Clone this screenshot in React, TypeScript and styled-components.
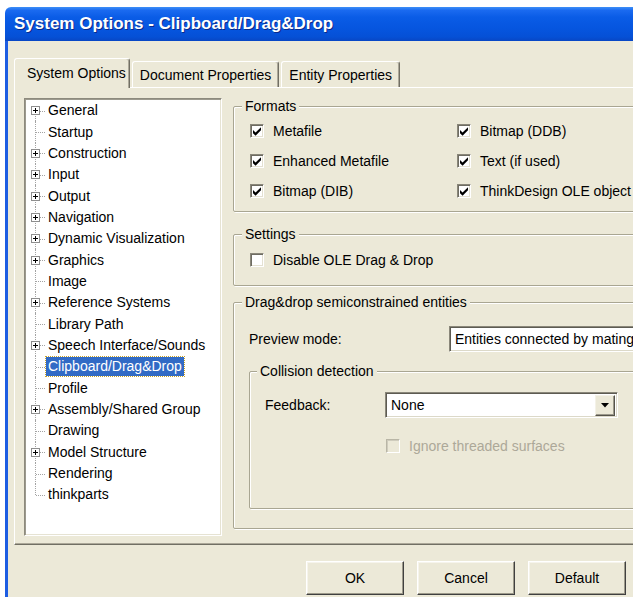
import React from "react";
import styled, { createGlobalStyle } from "styled-components";

const UI_FONT = `"Liberation Sans", Tahoma, Arial, sans-serif`;

const GlobalStyle = createGlobalStyle`
  html, body {
    margin: 0;
    padding: 0;
    background: #ffffff;
    overflow: hidden;
  }
  body {
    width: 633px;
    height: 597px;
  }
  *, *::before, *::after {
    box-sizing: border-box;
  }
`;

/* ---------- window frame ---------- */

const Window = styled.div`
  margin: 7px 0 0 5px;
  width: 660px;
  display: flex;
  flex-direction: column;
  font-family: ${UI_FONT};
  font-size: 14px;
  color: #000;
`;

const TitleBar = styled.div`
  height: 34px;
  display: flex;
  align-items: center;
  padding-left: 9px;
  background: linear-gradient(
    to bottom,
    #3d8ff7 0%,
    #1a6af0 10%,
    #0a5ce6 30%,
    #0656e0 60%,
    #0550d6 88%,
    #0846c4 100%
  );
  border-top-left-radius: 6px;
`;

const Title = styled.span`
  font-family: ${UI_FONT};
  font-weight: bold;
  font-size: 17px;
  color: #ffffff;
  text-shadow: 1px 1px 0 #0b2a8a;
`;

const Body = styled.div`
  height: 556px;
  background: #ece9d8;
  border-left: 3px solid #1d5de2;
  padding: 17px 0 0 6px;
  display: flex;
  flex-direction: column;
`;

/* ---------- tabs ---------- */

const TabStrip = styled.div`
  display: flex;
  align-items: flex-end;
  height: 29px;
  position: relative;
  z-index: 1;
`;

const Tab = styled.div<{ $active?: boolean }>`
  display: flex;
  align-items: center;
  justify-content: center;
  height: ${(p) => (p.$active ? "30px" : "26px")};
  margin-bottom: ${(p) => (p.$active ? "-1px" : "0")};
  margin-left: ${(p) => (p.$active ? "0" : "2px")};
  padding: ${(p) => (p.$active ? "0 3px 2px 12px" : "1px 7px 0 7px")};
  background: #ece9d8;
  border-top: 1px solid #ffffff;
  border-left: 1px solid #ffffff;
  border-right: 1px solid #716f64;
  box-shadow: inset -1px 0 0 #aca899;
  border-top-left-radius: 3px;
  border-top-right-radius: 3px;
  white-space: nowrap;
`;

const TabPanel = styled.div`
  height: 458px;
  display: flex;
  gap: 11px;
  padding: 10px 0 0 9px;
  border-top: 1px solid #ffffff;
  border-left: 1px solid #ffffff;
  border-bottom: 1px solid #716f64;
  box-shadow: inset 0 -1px 0 #aca899;
`;

/* ---------- tree ---------- */

const Tree = styled.ul`
  list-style: none;
  margin: 0;
  padding: 1px 0 0 0;
  width: 198px;
  height: 438px;
  flex: none;
  background: #ffffff;
  border: 1px solid;
  border-color: #8d8a7d #ffffff #ffffff #8d8a7d;
  box-shadow: inset 1px 1px 0 #9c9a8e, inset -1px -1px 0 #e6e3d3;
`;

const TreeRow = styled.li`
  display: flex;
  align-items: center;
  height: 21.35px;
  padding-left: 1px;
`;

const Connector = styled.span<{ $first?: boolean; $last?: boolean }>`
  position: relative;
  width: 20px;
  height: 100%;
  flex: none;
  display: flex;
  align-items: center;
  padding-left: 5px;

  &::before {
    content: "";
    position: absolute;
    left: 9px;
    top: ${(p) => (p.$first ? "50%" : "0")};
    bottom: ${(p) => (p.$last ? "50%" : "0")};
    border-left: 1px dotted #a3a3a3;
  }
  &::after {
    content: "";
    position: absolute;
    left: 10px;
    top: 50%;
    width: 9px;
    border-top: 1px dotted #a3a3a3;
  }
`;

const Expander = styled.span`
  position: relative;
  z-index: 1;
  width: 9px;
  height: 9px;
  border: 1px solid #8e8e8e;
  background: #ffffff;
  display: flex;
  align-items: center;
  justify-content: center;
`;

const TreeLabel = styled.span<{ $selected?: boolean }>`
  padding: 1px 2px;
  line-height: 17px;
  white-space: nowrap;
  background: ${(p) => (p.$selected ? "#316ac5" : "transparent")};
  color: ${(p) => (p.$selected ? "#ffffff" : "#000")};
  outline: ${(p) => (p.$selected ? "1px dotted #c9a227" : "none")};
`;

/* ---------- group boxes ---------- */

const RightColumn = styled.div`
  flex: 1;
  display: flex;
  flex-direction: column;
  padding-right: 4px;
`;

const Group = styled.fieldset<{ $spaceAbove?: number; $pad: string; $height?: number }>`
  margin: ${(p) => p.$spaceAbove ?? 0}px 0 0 0;
  padding: ${(p) => p.$pad};
  min-width: 0;
  height: ${(p) => (p.$height ? `${p.$height}px` : "auto")};
  border: 1px solid #a9a692;
  border-radius: 2px;
  box-shadow: inset 1px 1px 0 #ffffff, 1px 1px 0 #ffffff;
`;

/* the legend sits 8px in from the frame; $inset is the fieldset's own left padding */
const Legend = styled.legend<{ $inset: number }>`
  margin-left: ${(p) => 8 - p.$inset}px;
  padding: 0 3px;
  line-height: 17px;
  background: #ece9d8;
`;

const CheckGrid = styled.div`
  display: grid;
  grid-template-columns: 207px auto;
  grid-auto-rows: 30px;
`;

const CheckRow = styled.label<{ $disabled?: boolean }>`
  display: flex;
  align-items: center;
  gap: 9px;
  height: 30px;
  white-space: nowrap;
  color: ${(p) => (p.$disabled ? "#aca899" : "#000")};
`;

const CheckBoxFrame = styled.span<{ $disabled?: boolean }>`
  width: 14px;
  height: 14px;
  flex: none;
  display: flex;
  align-items: center;
  justify-content: center;
  background: ${(p) => (p.$disabled ? "#ece9d8" : "#ffffff")};
  border: 1px solid;
  border-color: ${(p) =>
    p.$disabled ? "#b9b6a6 #ffffff #ffffff #b9b6a6" : "#8a877a #ffffff #ffffff #8a877a"};
  box-shadow: ${(p) =>
    p.$disabled
      ? "inset 1px 1px 0 #cfccbd"
      : "inset 1px 1px 0 #6e6c62, inset -1px -1px 0 #e4e1d2"};
`;

const FieldRow = styled.div<{ $labelWidth: number }>`
  display: grid;
  grid-template-columns: ${(p) => p.$labelWidth}px auto;
  align-items: center;
`;

const ComboField = styled.div<{ $width: number }>`
  width: ${(p) => p.$width}px;
  height: 26px;
  display: flex;
  align-items: center;
  justify-content: space-between;
  padding: 0 2px 0 5px;
  background: #ffffff;
  border: 1px solid;
  border-color: #8a877a #ffffff #ffffff #8a877a;
  box-shadow: inset 1px 1px 0 #5d5b52, inset -1px -1px 0 #dcd9c9;
  white-space: nowrap;
  overflow: hidden;
`;

const DropButton = styled.span`
  width: 20px;
  height: 21px;
  flex: none;
  display: flex;
  align-items: center;
  justify-content: center;
  background: #ece9d8;
  border: 1px solid;
  border-color: #f4f2e8 #55534b #55534b #f4f2e8;
  box-shadow: inset -1px -1px 0 #9c998b;
`;

const DisabledOption = styled.div`
  margin: 13px 0 0 121px;
`;

/* ---------- dialog buttons ---------- */

const ButtonRow = styled.div`
  display: flex;
  justify-content: flex-end;
  gap: 13px;
  margin-top: 16px;
  padding-right: 39px;
`;

const DialogButton = styled.button`
  width: 98px;
  height: 34px;
  font-family: ${UI_FONT};
  font-size: 14px;
  color: #000;
  background: #ece9d8;
  border: 1px solid;
  border-color: #ffffff #404040 #404040 #ffffff;
  box-shadow: inset -1px -1px 0 #9d9a8b, inset 1px 1px 0 #f6f4ec;
  padding: 0;
`;

/* ---------- small drawings ---------- */

const CheckMark = () => (
  <svg width="9" height="9" viewBox="0 0 7 7" aria-hidden="true">
    <polygon points="0,2.3 2,4.3 6.2,0.1 6.2,2.6 2,6.8 0,4.8" fill="#000" />
  </svg>
);

const PlusSign = () => (
  <svg width="5" height="5" viewBox="0 0 5 5" aria-hidden="true">
    <rect x="0" y="2" width="5" height="1" fill="#000" />
    <rect x="2" y="0" width="1" height="5" fill="#000" />
  </svg>
);

const DownArrow = () => (
  <svg width="8" height="5" viewBox="0 0 8 5" aria-hidden="true">
    <polygon points="0,0 8,0 4,4.5" fill="#000" />
  </svg>
);

const CheckBox: React.FC<{ label: string; checked?: boolean; disabled?: boolean }> = ({
  label,
  checked,
  disabled,
}) => (
  <CheckRow $disabled={disabled}>
    <CheckBoxFrame $disabled={disabled}>{checked && <CheckMark />}</CheckBoxFrame>
    <span>{label}</span>
  </CheckRow>
);

/* ---------- data ---------- */

const categories: { name: string; expandable: boolean }[] = [
  { name: "General", expandable: true },
  { name: "Startup", expandable: false },
  { name: "Construction", expandable: true },
  { name: "Input", expandable: true },
  { name: "Output", expandable: true },
  { name: "Navigation", expandable: true },
  { name: "Dynamic Visualization", expandable: true },
  { name: "Graphics", expandable: true },
  { name: "Image", expandable: false },
  { name: "Reference Systems", expandable: true },
  { name: "Library Path", expandable: false },
  { name: "Speech Interface/Sounds", expandable: true },
  { name: "Clipboard/Drag&Drop", expandable: false },
  { name: "Profile", expandable: false },
  { name: "Assembly/Shared Group", expandable: true },
  { name: "Drawing", expandable: false },
  { name: "Model Structure", expandable: true },
  { name: "Rendering", expandable: false },
  { name: "thinkparts", expandable: false },
];

const formats = [
  "Metafile",
  "Bitmap (DDB)",
  "Enhanced Metafile",
  "Text (if used)",
  "Bitmap (DIB)",
  "ThinkDesign OLE object",
];

const tabs = ["System Options", "Document Properties", "Entity Properties"];

export default function App() {
  const selected = "Clipboard/Drag&Drop";
  return (
    <>
      <GlobalStyle />
      <Window>
        <TitleBar>
          <Title>System Options - Clipboard/Drag&amp;Drop</Title>
        </TitleBar>
        <Body>
          <TabStrip>
            {tabs.map((t, i) => (
              <Tab key={t} $active={i === 0}>
                {t}
              </Tab>
            ))}
          </TabStrip>
          <TabPanel>
            <Tree>
              {categories.map((c, i) => (
                <TreeRow key={c.name}>
                  <Connector $first={i === 0} $last={i === categories.length - 1}>
                    {c.expandable && (
                      <Expander>
                        <PlusSign />
                      </Expander>
                    )}
                  </Connector>
                  <TreeLabel $selected={c.name === selected}>{c.name}</TreeLabel>
                </TreeRow>
              ))}
            </Tree>

            <RightColumn>
              <Group $pad="1px 0 5px 16px">
                <Legend $inset={16}>Formats</Legend>
                <CheckGrid>
                  {formats.map((f) => (
                    <CheckBox key={f} label={f} checked />
                  ))}
                </CheckGrid>
              </Group>

              <Group $spaceAbove={14} $pad="2px 0 10px 16px">
                <Legend $inset={16}>Settings</Legend>
                <CheckBox label="Disable OLE Drag & Drop" />
              </Group>

              <Group $spaceAbove={8} $pad="15px 0 0 15px" $height={235}>
                <Legend $inset={15}>Drag&amp;drop semiconstrained entities</Legend>
                <FieldRow $labelWidth={200}>
                  <span>Preview mode:</span>
                  <ComboField $width={240}>Entities connected by mating</ComboField>
                </FieldRow>

                <Group $spaceAbove={11} $pad="12px 0 0 15px" $height={146}>
                  <Legend $inset={16}>Collision detection</Legend>
                  <FieldRow $labelWidth={120}>
                    <span>Feedback:</span>
                    <ComboField $width={233}>
                      <span>None</span>
                      <DropButton>
                        <DownArrow />
                      </DropButton>
                    </ComboField>
                  </FieldRow>
                  <DisabledOption>
                    <CheckBox label="Ignore threaded surfaces" disabled />
                  </DisabledOption>
                </Group>
              </Group>
            </RightColumn>
          </TabPanel>

          <ButtonRow>
            <DialogButton>OK</DialogButton>
            <DialogButton>Cancel</DialogButton>
            <DialogButton>Default</DialogButton>
          </ButtonRow>
        </Body>
      </Window>
    </>
  );
}
